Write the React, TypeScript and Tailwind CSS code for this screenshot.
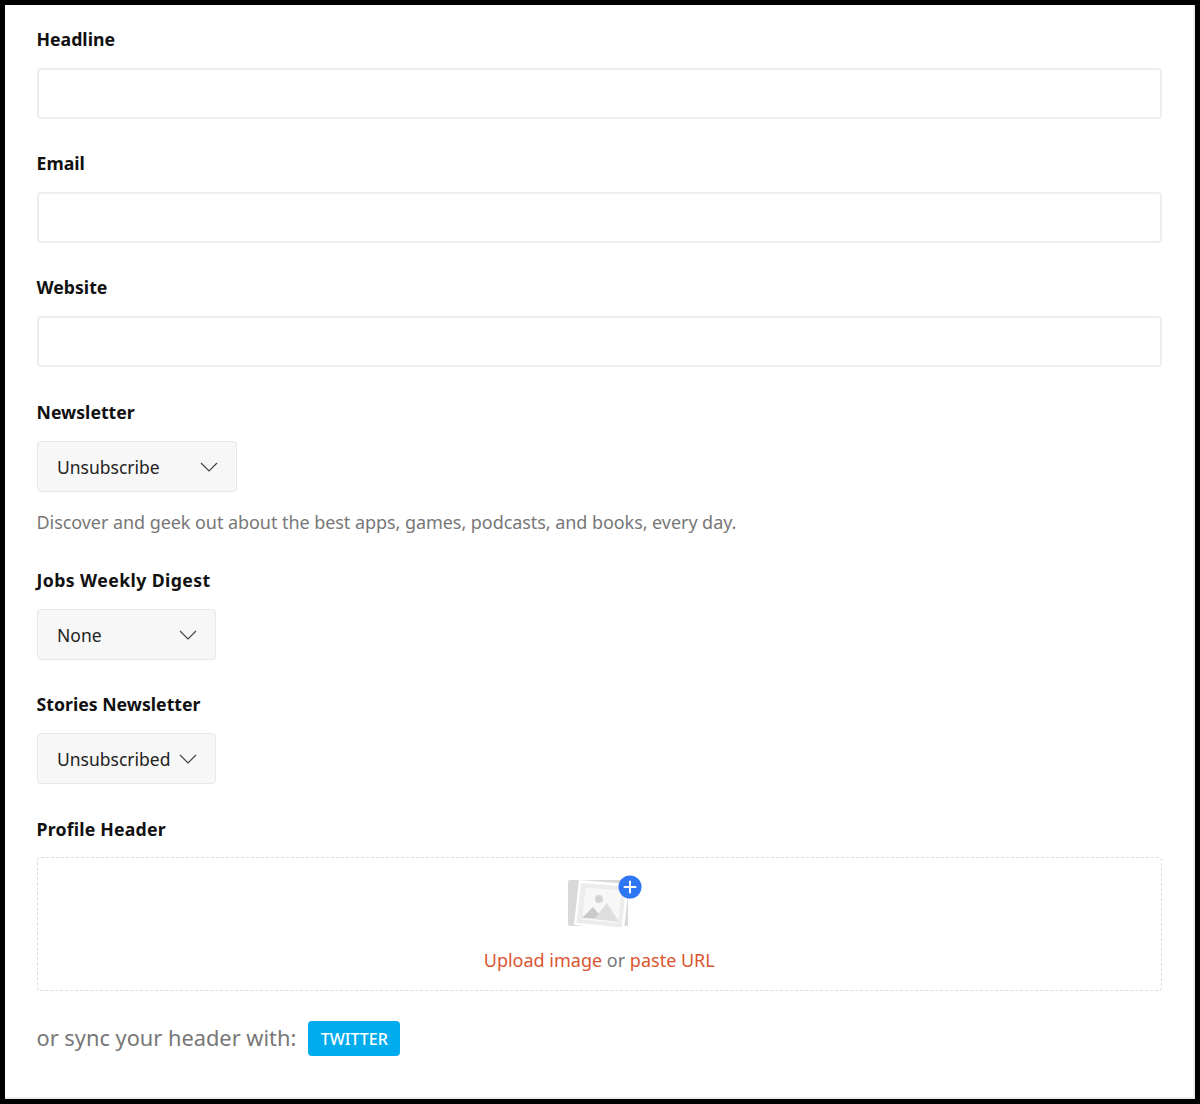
import React from 'react';

const font = { label: 'text-[17.7px] leading-[24px] font-bold text-[#111111]' };

function Field({ label }: { label: string }) {
  return (
    <div className="mb-[32px]">
      <div className={`${font.label} mb-[17px]`}>{label}</div>
      <div className="h-[51px] rounded-[4px] border-2 border-[#eeeeee] bg-white" />
    </div>
  );
}

function Select({ value, width }: { value: string; width: string }) {
  return (
    <div
      className={`flex h-[51px] items-center justify-between rounded-[4px] border border-[#e8e8e8] bg-[#f7f7f7] pl-[19.5px] pr-[18.5px] text-[17.5px] text-[#222222] ${width}`}
    >
      <span className="pt-[2px]">{value}</span>
      <svg width="18" height="10" viewBox="0 0 18 10" fill="none" stroke="#444444" strokeWidth="1.2">
        <path d="M1 1l8 8 8-8" />
      </svg>
    </div>
  );
}

function UploadIcon() {
  return (
    <svg width="76" height="56" viewBox="0 0 76 56" fill="none">
      <path d="M3 5h58v46H3a2 2 0 0 1-2-2V7a2 2 0 0 1 2-2z" fill="#d9d9d9" />
      <path d="M12 5l50 4-5 46-50-5z" fill="#ffffff" />
      <path d="M14 8l45 3.500-4.300 41L9.500 48z" fill="#ececec" />
      <path d="M18.500 12.500l36 3-3.300 32.500-36-3.500z" fill="#f7f7f7" />
      <circle cx="32" cy="24" r="4" fill="#d4d4d4" />
      <path d="M15 43l11-11 10 12z" fill="#c9c9c9" />
      <path d="M27 44l13-16 12 19z" fill="#dedede" />
      <circle cx="63" cy="12" r="11.500" fill="#2f76f5" />
      <path d="M63 6.500v11M57.500 12h11" stroke="#ffffff" strokeWidth="2" strokeLinecap="round" />
    </svg>
  );
}

export default function App() {
  return (
    <div className="h-[1104px] w-[1200px] border-[5px] border-black bg-white font-['Noto_Sans','Open_Sans',sans-serif]">
      <div className="h-full border-r-2 border-b-2 border-[#ececec] pl-[31.5px] pr-[31px] pt-[22px]">
        <Field label="Headline" />
        <Field label="Email" />
        <Field label="Website" />

        <div className={`${font.label} mt-[33px] mb-[17px]`}>Newsletter</div>
        <Select value="Unsubscribe" width="w-[200.5px]" />
        <p className="mt-[18px] mb-[34px] text-[18px] leading-[24px] tracking-[-0.06px] text-[#777777]">
          Discover and geek out about the best apps, games, podcasts, and books, every day.
        </p>

        <div className={`${font.label} mb-[17px] tracking-[0.4px]`}>Jobs Weekly Digest</div>
        <Select value="None" width="w-[179.5px]" />

        <div className={`${font.label} mt-[32px] mb-[17px]`}>Stories Newsletter</div>
        <Select value="Unsubscribed" width="w-[179.5px]" />

        <div className={`${font.label} mt-[33px] mb-[16px] tracking-[0.2px]`}>Profile Header</div>
        <div className="flex h-[134px] flex-col items-center rounded-[4px] border border-dashed border-[#dddddd] pt-[17px]">
          <div className="ml-[12px]">
            <UploadIcon />
          </div>
          <div className="mt-[17px] text-[18px] leading-[24px] text-[#777777]">
            <span className="text-[#da552f]">Upload image</span> or{' '}
            <span className="text-[#da552f]">paste URL</span>
          </div>
        </div>

        <div className="mt-[30px] flex h-[35px] items-start">
          <span className="text-[21.8px] leading-[33px] text-[#777777]">or sync your header with:</span>
          <span className="ml-[12px] flex h-[35px] w-[92px] items-center justify-center rounded-[4px] bg-[#00aced] text-[16px] font-medium text-white">
            TWITTER
          </span>
        </div>
      </div>
    </div>
  );
}
